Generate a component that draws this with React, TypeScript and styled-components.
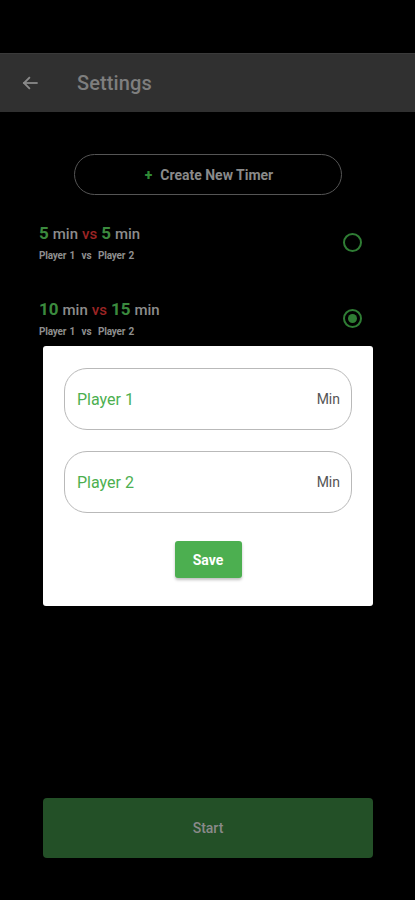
import React from "react";
import styled, { createGlobalStyle } from "styled-components";

const Global = createGlobalStyle`
  html, body { margin: 0; padding: 0; background: #000; }
  body { font-family: Roboto, "Noto Sans", sans-serif; }
  * { box-sizing: border-box; }
`;

const Page = styled.div`
  width: 415px;
  height: 900px;
  background: #000;
  display: flex;
  flex-direction: column;
  position: relative;
  overflow: hidden;
`;

const StatusBar = styled.div`
  height: 53px;
  background: #000;
`;

const AppBar = styled.header`
  height: 59px;
  background: #303030;
  border-top: 1px solid #3a3a3a;
  display: flex;
  align-items: center;
  padding-left: 20px;
`;

const BackButton = styled.span`
  width: 20px;
  height: 20px;
  display: flex;
  align-items: center;
  justify-content: center;
  margin-right: 37px;
`;

const Title = styled.h1`
  margin: 0;
  font-size: 20px;
  font-weight: 500;
  color: #7e7e7e;
  letter-spacing: 0.1px;
`;

const Content = styled.main`
  flex: 1;
  display: flex;
  flex-direction: column;
  padding: 42px 0 0 0;
`;

const CreateButton = styled.button`
  align-self: flex-start;
  margin-left: 74px;
  width: 268px;
  height: 41px;
  border-radius: 21px;
  border: 1.5px solid #555;
  background: transparent;
  color: #8a8a8a;
  font-family: Roboto, sans-serif;
  font-size: 14px;
  font-weight: 700;
  display: flex;
  align-items: center;
  justify-content: center;
  gap: 8px;
  padding: 0 0 0 2px;
`;

const Plus = styled.span`
  color: #2f8a35;
  font-size: 14px;
  font-weight: 900;
  line-height: 1;
`;

const List = styled.div`
  display: flex;
  flex-direction: column;
  margin-top: 23px;
`;

const Row = styled.div`
  height: 76px;
  display: flex;
  align-items: flex-start;
  justify-content: space-between;
  padding: 4px 53px 0 39px;
`;

const RowText = styled.div`
  display: flex;
  flex-direction: column;
`;

const Headline = styled.div`
  display: flex;
  align-items: baseline;
  gap: 4px;
  line-height: 22px;
`;

const Num = styled.span`
  color: #3b8a3e;
  font-size: 17px;
  font-weight: 700;
`;

const Unit = styled.span`
  color: #8c8c8c;
  font-size: 15px;
  font-weight: 500;
`;

const Vs = styled.span`
  color: #9b2424;
  font-size: 15px;
  font-weight: 500;
`;

const Sub = styled.div`
  margin-top: 5px;
  color: #8e8e8e;
  font-size: 10px;
  font-weight: 700;
  letter-spacing: -0.2px;
  word-spacing: 1px;
`;

const Radio = styled.span<{ $checked?: boolean }>`
  margin-top: 11px;
  width: 19px;
  height: 19px;
  border-radius: 50%;
  border: 2px solid #2f7d34;
  display: flex;
  align-items: center;
  justify-content: center;
  &::after {
    content: "";
    width: 9px;
    height: 9px;
    border-radius: 50%;
    background: ${(p) => (p.$checked ? "#2f7d34" : "transparent")};
  }
`;

const StartButton = styled.button`
  margin: auto 42px 42px 43px;
  height: 60px;
  border: none;
  border-radius: 4px;
  background: #235027;
  color: #8a8a8a;
  font-family: Roboto, sans-serif;
  font-size: 14px;
  font-weight: 500;
`;

const Dialog = styled.div`
  position: absolute;
  left: 43px;
  top: 346px;
  width: 330px;
  height: 260px;
  background: #fff;
  border-radius: 3px;
  padding: 22px 21px 0 21px;
  display: flex;
  flex-direction: column;
  align-items: stretch;
`;

const Field = styled.div`
  height: 62px;
  border: 1.5px solid #b9b9b9;
  border-radius: 23px;
  display: flex;
  align-items: center;
  justify-content: space-between;
  padding: 0 11px 0 12px;
  margin-bottom: 21px;
`;

const FieldLabel = styled.span`
  color: #4caf50;
  font-size: 16px;
`;

const FieldSuffix = styled.span`
  color: #555;
  font-size: 14px;
`;

const SaveButton = styled.button`
  align-self: center;
  margin-top: 7px;
  width: 67px;
  height: 37px;
  border: none;
  border-radius: 3px;
  background: #4caf50;
  color: #fff;
  font-family: Roboto, sans-serif;
  font-size: 14px;
  font-weight: 700;
  box-shadow: 0 2px 3px rgba(0, 0, 0, 0.25);
`;

const timers = [
  { a: 5, b: 5, checked: false },
  { a: 10, b: 15, checked: true },
];

export default function App() {
  return (
    <>
      <Global />
      <Page>
        <StatusBar />
        <AppBar>
          <BackButton>
            <svg width="18" height="18" viewBox="0 0 24 24" fill="none" stroke="#8a8a8a" strokeWidth="2.4" strokeLinecap="square">
              <path d="M21 12H4" />
              <path d="M11 5l-7 7 7 7" />
            </svg>
          </BackButton>
          <Title>Settings</Title>
        </AppBar>
        <Content>
          <CreateButton>
            <Plus>+</Plus>
            Create New Timer
          </CreateButton>
          <List>
            {timers.map((t, i) => (
              <Row key={i}>
                <RowText>
                  <Headline>
                    <Num>{t.a}</Num>
                    <Unit>min</Unit>
                    <Vs>vs</Vs>
                    <Num>{t.b}</Num>
                    <Unit>min</Unit>
                  </Headline>
                  <Sub>Player 1 &nbsp;vs&nbsp; Player 2</Sub>
                </RowText>
                <Radio $checked={t.checked} />
              </Row>
            ))}
          </List>
          <StartButton>Start</StartButton>
        </Content>
        <Dialog>
          <Field>
            <FieldLabel>Player 1</FieldLabel>
            <FieldSuffix>Min</FieldSuffix>
          </Field>
          <Field>
            <FieldLabel>Player 2</FieldLabel>
            <FieldSuffix>Min</FieldSuffix>
          </Field>
          <SaveButton>Save</SaveButton>
        </Dialog>
      </Page>
    </>
  );
}
